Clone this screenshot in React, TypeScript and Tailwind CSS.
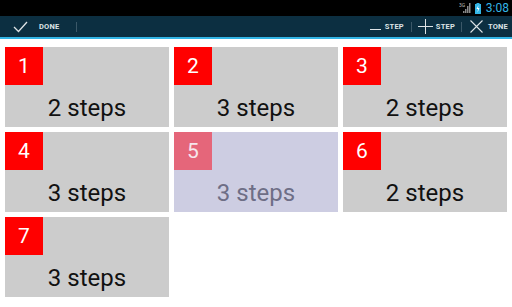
import React from "react";

const tiles = [
  { n: 1, s: "2 steps" },
  { n: 2, s: "3 steps" },
  { n: 3, s: "2 steps" },
  { n: 4, s: "3 steps" },
  { n: 5, s: "3 steps", sel: true },
  { n: 6, s: "2 steps" },
  { n: 7, s: "3 steps" },
];

export default function App() {
  return (
    <div className="w-[512px] h-[307px] bg-white overflow-hidden flex flex-col" style={{ fontFamily: "Roboto, 'Noto Sans', sans-serif" }}>
      {/* status bar */}
      <div className="h-[16px] bg-black flex items-center justify-end pr-[3px] gap-[4px]">
        <svg width="12" height="12" viewBox="0 0 12 12">
          <text x="0" y="5" fontSize="5" fill="#bbb" fontFamily="Roboto, sans-serif">3G</text>
          <rect x="4" y="9" width="1.5" height="2" fill="#888" />
          <rect x="6" y="7" width="1.5" height="4" fill="#888" />
          <rect x="8" y="4" width="1.5" height="7" fill="#888" />
          <rect x="10" y="1" width="1.5" height="10" fill="#888" />
        </svg>
        <svg width="6" height="11" viewBox="0 0 6 11">
          <rect x="1.5" y="0" width="3" height="1" fill="#33b5e5" />
          <rect x="0" y="1" width="6" height="10" fill="#33b5e5" />
          <path d="M3.5 2 L1.5 6 L3 6 L2.5 9.5 L4.5 5 L3 5 Z" fill="#fff" />
        </svg>
        <span className="text-[12px] leading-none text-[#33b5e5] ml-[1px]">3:08</span>
      </div>
      {/* action bar */}
      <div className="h-[21px] bg-[#0c2f41] flex items-center text-[#dde3e6] text-[7.5px] font-bold tracking-[0.2px]">
        <div className="flex items-center pl-[13px]">
          <svg width="15" height="12" viewBox="0 0 15 12">
            <path d="M1 6 L5.5 10.5 L14 1" stroke="#dde3e6" strokeWidth="1.3" fill="none" />
          </svg>
          <span className="ml-[11px]">DONE</span>
          <div className="ml-[17px] w-px h-[10px] bg-[#3b5868]" />
        </div>
        <div className="flex-1" />
        <div className="flex items-center pr-[4px]">
          <svg width="11" height="12" viewBox="0 0 11 12">
            <path d="M0 8.5 L11 8.5" stroke="#dde3e6" strokeWidth="1" />
          </svg>
          <span className="ml-[4px]">STEP</span>
          <div className="ml-[7px] w-px h-[10px] bg-[#3b5868]" />
          <svg className="ml-[6px]" width="15" height="15" viewBox="0 0 15 15">
            <path d="M0 7.5 L15 7.5 M7.5 0 L7.5 15" stroke="#dde3e6" strokeWidth="1" />
          </svg>
          <span className="ml-[3px]">STEP</span>
          <div className="ml-[6px] w-px h-[10px] bg-[#3b5868]" />
          <svg className="ml-[8px]" width="13" height="13" viewBox="0 0 13 13">
            <path d="M0.5 0.5 L12.5 12.5 M12.5 0.5 L0.5 12.5" stroke="#dde3e6" strokeWidth="1.1" />
          </svg>
          <span className="ml-[5px]">TONE</span>
        </div>
      </div>
      <div className="h-[2px] bg-[#33b5e5]" />
      {/* grid */}
      <div className="grid grid-cols-[164px_164px_164px] auto-rows-[80px] gap-[5px] px-[5px] pt-[8px]">
        {tiles.map((t) => (
          <div key={t.n} className={t.sel ? "bg-[#cdcde2] flex flex-col" : "bg-[#cccccc] flex flex-col"}>
            <div className={(t.sel ? "bg-[#e5667a] text-[#f6e6ec]" : "bg-[#ff0000] text-white") + " w-[38px] h-[38px] flex items-center justify-center text-[21px] leading-none"}>
              {t.n}
            </div>
            <div className={(t.sel ? "text-[#6e6e86]" : "text-[#111]") + " mt-[9px] text-center text-[24px] leading-[28px]"}>
              {t.s}
            </div>
          </div>
        ))}
      </div>
    </div>
  );
}
